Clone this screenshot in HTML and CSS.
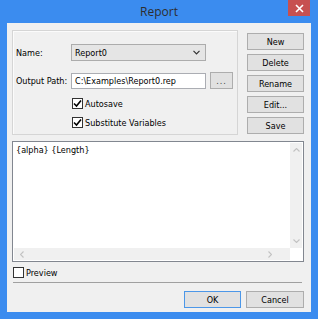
FILE: index.html
```html
<!DOCTYPE html>
<html lang="en">
<head>
    <meta charset="UTF-8">
    <title>Report</title>
    <link rel="stylesheet" href="styles.css">
</head>
<body>
    <div class="window">
        <div class="titlebar">
            <span class="title">Report</span>
            <button class="close" title="Close">
                <svg width="9" height="9" viewBox="0 0 9 9"><path d="M1 1 L8 8 M8 1 L1 8" stroke="#fff" stroke-width="1.6"/></svg>
            </button>
        </div>

        <div class="client">
            <div class="top">
                <div class="group">
                    <div class="row">
                        <label class="lbl">Name:</label>
                        <div class="select">
                            <span>Report0</span>
                            <svg width="7" height="5" viewBox="0 0 7 5"><path d="M0.5 0.8 L3.5 3.8 L6.5 0.8" fill="none" stroke="#333" stroke-width="1.2"/></svg>
                        </div>
                    </div>
                    <div class="row path-row">
                        <label class="lbl">Output Path:</label>
                        <div class="textbox">C:\Examples\Report0.rep</div>
                        <button class="btn browse">...</button>
                    </div>
                    <div class="checks">
                        <label class="check">
                            <span class="box"><svg width="9" height="9" viewBox="0 0 9 9"><path d="M1 4.5 L3.5 7 L8 1.5" fill="none" stroke="#000" stroke-width="1.6"/></svg></span>
                            Autosave
                        </label>
                        <label class="check">
                            <span class="box"><svg width="9" height="9" viewBox="0 0 9 9"><path d="M1 4.5 L3.5 7 L8 1.5" fill="none" stroke="#000" stroke-width="1.6"/></svg></span>
                            Substitute Variables
                        </label>
                    </div>
                </div>

                <div class="side">
                    <button class="btn">New</button>
                    <button class="btn">Delete</button>
                    <button class="btn">Rename</button>
                    <button class="btn">Edit...</button>
                    <button class="btn">Save</button>
                </div>
            </div>

            <div class="editor">
                <div class="editor-main">
                    <div class="editor-text">{alpha} {Length}</div>
                    <div class="vscroll">
                        <svg width="7" height="4" viewBox="0 0 7 4"><path d="M0.5 3.5 L3.5 0.5 L6.5 3.5" fill="none" stroke="#c2c2c2" stroke-width="1.1"/></svg>
                        <svg width="7" height="4" viewBox="0 0 7 4"><path d="M0.5 0.5 L3.5 3.5 L6.5 0.5" fill="none" stroke="#c2c2c2" stroke-width="1.1"/></svg>
                    </div>
                </div>
                <div class="hscroll">
                    <div class="hscroll-track">
                        <svg width="4" height="7" viewBox="0 0 4 7"><path d="M3.5 0.5 L0.5 3.5 L3.5 6.5" fill="none" stroke="#c2c2c2" stroke-width="1.1"/></svg>
                        <svg width="4" height="7" viewBox="0 0 4 7"><path d="M0.5 0.5 L3.5 3.5 L0.5 6.5" fill="none" stroke="#c2c2c2" stroke-width="1.1"/></svg>
                    </div>
                    <div class="corner"></div>
                </div>
            </div>

            <label class="check preview">
                <span class="box"></span>
                Preview
            </label>

            <div class="separator"></div>

            <div class="footer">
                <button class="btn default">OK</button>
                <button class="btn cancel">Cancel</button>
            </div>
        </div>
    </div>
</body>
</html>
```

FILE: styles.css
```css
/* Dialog window */
body {
    margin: 0;
    padding: 0;
    font-family: "DejaVu Sans Condensed", "DejaVu Sans", sans-serif;
    font-stretch: condensed;
    font-size: 9px;
    color: #000;
}
.window {
    width: 318px;
    height: 319px;
    box-sizing: border-box;
    background-color: #3b8cef;
    padding: 0 7px 7px 7px;
    display: flex;
    flex-direction: column;
}
.titlebar {
    height: 23px;
    display: grid;
    grid-template-columns: 1fr auto 1fr;
}
.title {
    grid-column: 2;
    align-self: center;
    font-family: "Open Sans", sans-serif;
    font-stretch: normal;
    font-size: 12px;
    color: #2e2e2e;
    margin-top: -1px;
}
.close {
    grid-column: 3;
    justify-self: end;
    align-self: start;
    width: 22px;
    height: 16px;
    margin-right: 1px;
    padding: 0;
    border: none;
    background-color: #c75050;
    display: flex;
    align-items: center;
    justify-content: center;
}
.client {
    flex: 1;
    background-color: #f0f0f0;
    padding: 7px 7px 4px 5px;
    display: flex;
    flex-direction: column;
}

/* Top section */
.top {
    display: flex;
    gap: 9px;
    height: 105px;
}
.group {
    width: 226px;
    box-sizing: border-box;
    border: 1px solid #d5d5d5;
    box-shadow: inset 1px 1px 0 #fbfbfb;
    padding: 13px 4px 0 3px;
    display: flex;
    flex-direction: column;
}
.row {
    display: flex;
    align-items: center;
    height: 17px;
}
.path-row {
    margin-top: 11px;
}
.lbl {
    width: 55px;
    flex-shrink: 0;
}
.select {
    width: 135px;
    height: 17px;
    box-sizing: border-box;
    border: 1px solid #acacac;
    background-color: #e5e5e5;
    display: flex;
    align-items: center;
    justify-content: space-between;
    padding: 0 5px 0 3px;
}
.textbox {
    width: 135px;
    height: 16px;
    box-sizing: border-box;
    border: 1px solid #abadb3;
    background-color: #fff;
    padding: 0 3px;
    display: flex;
    align-items: center;
}
.btn {
    font: inherit;
    color: #000;
    height: 17px;
    padding: 0;
    border: 1px solid #adadad;
    background-color: #e1e1e1;
}
.browse {
    width: 23px;
    margin-left: 4px;
    color: #444;
    letter-spacing: 1px;
}
.checks {
    margin-top: 8px;
    padding-left: 56px;
    display: flex;
    flex-direction: column;
    gap: 6px;
}
.check {
    display: flex;
    align-items: center;
    gap: 2px;
    height: 13px;
}
.box {
    width: 11px;
    height: 11px;
    box-sizing: border-box;
    border: 1px solid #333;
    background-color: #fff;
    display: flex;
    align-items: center;
    justify-content: center;
}
.side {
    width: 57px;
    padding-top: 3px;
    display: flex;
    flex-direction: column;
    gap: 4px;
}

/* Template editor */
.editor {
    margin-top: 6px;
    height: 121px;
    box-sizing: border-box;
    border: 1px solid #828790;
    background-color: #fff;
    display: flex;
    flex-direction: column;
}
.editor-main {
    flex: 1;
    display: flex;
}
.editor-text {
    flex: 1;
    padding: 3px 3px;
}
.vscroll {
    width: 12px;
    margin: 1px 1px 0 0;
    background-color: #f0f0f0;
    display: flex;
    flex-direction: column;
    justify-content: space-between;
    align-items: center;
    padding: 5px 0 5px;
}
.hscroll {
    height: 13px;
    display: flex;
}
.hscroll-track {
    flex: 1;
    background-color: #f0f0f0;
    margin: 0 0 1px 1px;
    display: flex;
    justify-content: space-between;
    align-items: center;
    padding: 0 18px 0 6px;
}
.corner {
    width: 13px;
    background-color: #fff;
}

/* Bottom */
.preview {
    margin: 5px 0 0 1px;
    height: 11px;
}
.separator {
    margin: 4px 2px 0 1px;
    height: 1px;
    background-color: #a0a0a0;
}
.footer {
    margin-top: 8px;
    display: flex;
    justify-content: flex-end;
    gap: 5px;
}
.footer .btn {
    width: 57px;
}
.footer .cancel {
    width: 58px;
}
.btn.default {
    border-color: #4c97e8;
}
```
